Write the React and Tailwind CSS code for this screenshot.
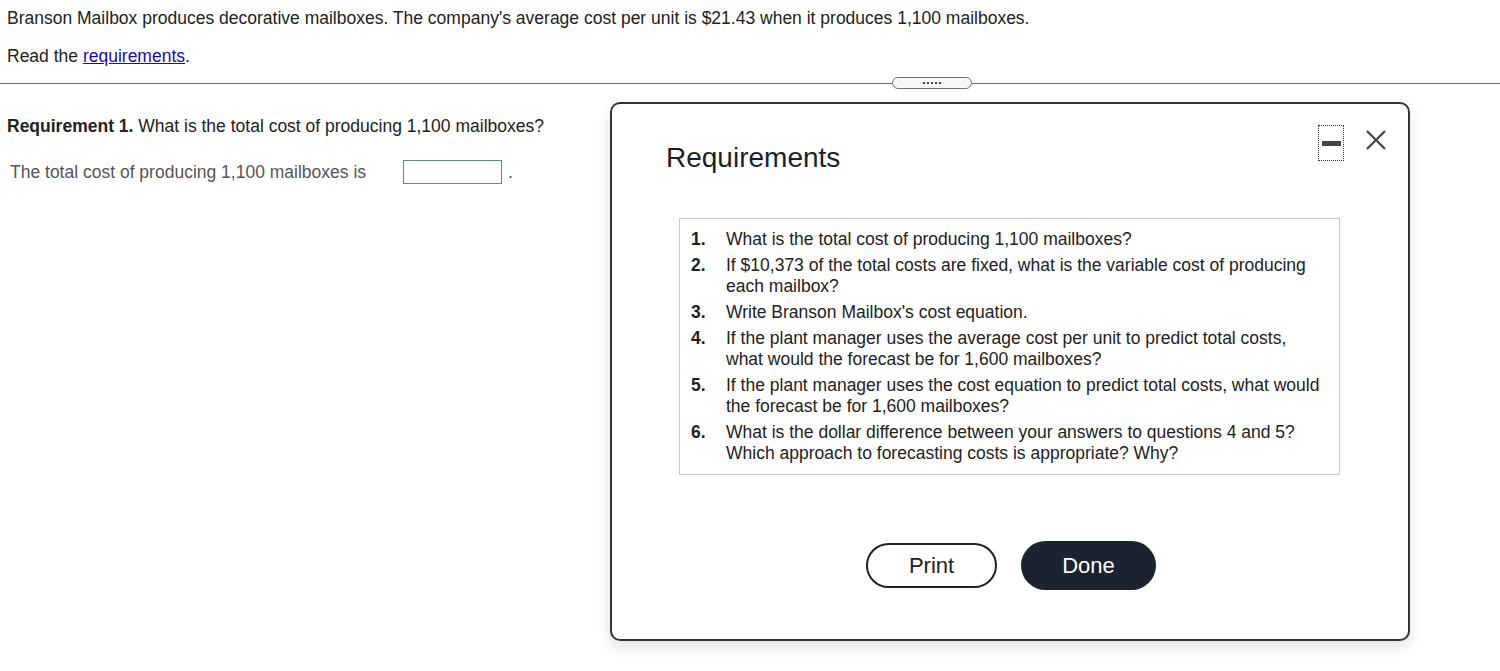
export default function App() {
  const items = [
    ["1.", "What is the total cost of producing 1,100 mailboxes?"],
    ["2.", "If $10,373 of the total costs are fixed, what is the variable cost of producing each mailbox?"],
    ["3.", "Write Branson Mailbox's cost equation."],
    ["4.", "If the plant manager uses the average cost per unit to predict total costs, what would the forecast be for 1,600 mailboxes?"],
    ["5.", "If the plant manager uses the cost equation to predict total costs, what would the forecast be for 1,600 mailboxes?"],
    ["6.", "What is the dollar difference between your answers to questions 4 and 5? Which approach to forecasting costs is appropriate? Why?"],
  ];
  return (
    <div className="relative w-[1500px] h-[671px] bg-white overflow-hidden text-[17.5px] text-[#222]" style={{ fontFamily: '"Liberation Sans", Arial, sans-serif' }}>
      <div className="px-[7px] pt-[8px]">
        <p className="leading-[20px]">Branson Mailbox produces decorative mailboxes. The company's average cost per unit is $21.43 when it produces 1,100 mailboxes.</p>
        <p className="leading-[20px] mt-[18px]">Read the <span className="text-[#1a0dab] underline">requirements</span>.</p>
      </div>
      <div className="relative mt-[11px] h-[12px] flex items-center">
        <div className="w-full h-px bg-[#6b6b6b]"></div>
        <div className="absolute left-[892px] top-0 w-[80px] h-[12px] rounded-full border border-[#6b7280] bg-[#f7f7f7] flex items-center justify-center gap-[2px]">
          <span className="w-[2px] h-[2px] bg-[#444]"></span>
          <span className="w-[2px] h-[2px] bg-[#444]"></span>
          <span className="w-[2px] h-[2px] bg-[#444]"></span>
          <span className="w-[2px] h-[2px] bg-[#444]"></span>
          <span className="w-[2px] h-[2px] bg-[#444]"></span>
        </div>
      </div>
      <div className="px-[7px] mt-[27px]">
        <p className="leading-[20px]"><b>Requirement 1.</b> What is the total cost of producing 1,100 mailboxes?</p>
        <div className="flex items-center mt-[23px] pl-[3px]">
          <span className="text-[#555] leading-[20px]">The total cost of producing 1,100 mailboxes is</span>
          <span className="ml-[37px] w-[99px] h-[24px] border border-[#5a8aa0] bg-white"></span>
          <span className="ml-[6px] text-[#555]">.</span>
        </div>
      </div>

      <div className="absolute left-[610px] top-[102px] w-[800px] h-[539px] bg-white border-2 border-[#333] rounded-[10px] shadow-[0_6px_14px_rgba(0,0,0,0.12)]">
        <div className="absolute right-[64px] top-[21px] w-[26px] h-[36px] border border-dotted border-[#333] flex items-center justify-center">
          <span className="w-[19px] h-[5px] bg-[#444]"></span>
        </div>
        <svg className="absolute right-[21px] top-[25px]" width="22" height="22" viewBox="0 0 22 22">
          <path d="M2 2 L20 20 M20 2 L2 20" stroke="#444" strokeWidth="2.2" fill="none" />
        </svg>
        <h2 className="ml-[54px] mt-[38px] text-[28px] leading-[32px] text-[#1b1f2a]">Requirements</h2>
        <div className="ml-[67px] mt-[44px] w-[661px] border border-[#c8c8c8] pt-[10px] pb-[10px] pl-[11px] pr-[16px]">
          <ol className="flex flex-col gap-[5px]">
            {items.map(([n, t]) => (
              <li key={n} className="flex leading-[21px] text-[#222]">
                <span className="w-[35px] shrink-0 font-bold">{n}</span>
                <span>{t}</span>
              </li>
            ))}
          </ol>
        </div>
        <div className="flex justify-center items-center gap-[24px] mt-[66px] pl-[2px]">
          <button className="w-[131px] h-[45px] rounded-full border-2 border-[#222] bg-white text-[22px] text-[#222]">Print</button>
          <button className="w-[135px] h-[49px] rounded-full bg-[#1b2230] text-[22px] text-white">Done</button>
        </div>
      </div>
    </div>
  );
}
